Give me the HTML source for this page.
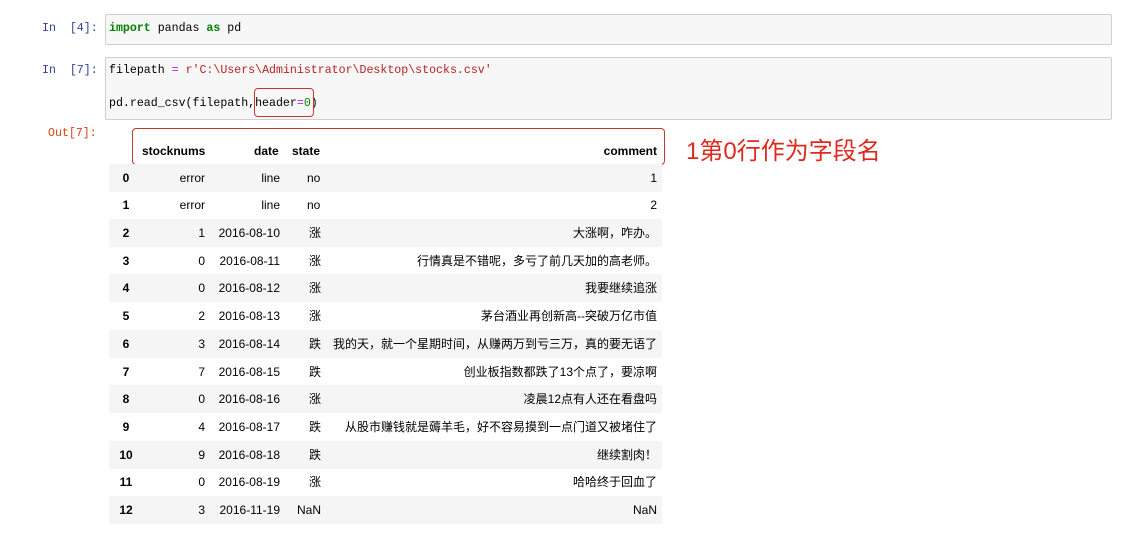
<!DOCTYPE html>
<html><head><meta charset="utf-8"><style>
body{margin:0;width:1135px;height:539px;background:#fff;position:relative;overflow:hidden;font-family:"Liberation Sans","Noto Sans CJK SC",sans-serif;}
.p{position:absolute;font-family:"Liberation Mono","Noto Sans CJK SC",monospace;font-size:11.6px;}
.box{position:absolute;left:105px;width:1005px;border:1px solid #cfcfcf;background:#f7f7f7;border-radius:2px;}
.code{position:absolute;left:109px;font-family:"Liberation Mono",monospace;font-size:11.6px;color:#000;}
.k{color:#008000;font-weight:bold}
.s{color:#ba2121}
.o{color:#aa22ff}
.n{color:#080}
.r{position:absolute;left:109px;width:553px;height:28px;font-size:12px;color:#000;}
.r.g{background:#f5f5f5}
.r span{position:absolute;top:7px;line-height:14px;}
.i{font-weight:bold;width:30px;text-align:center;left:2px}
.a{right:457px}.d{right:382px}.c{right:5px}
.r span.cj{left:200px}
.h{position:absolute;top:144px;font-size:12px;font-weight:bold}
</style></head><body>
<div class="p" style="left:42px;top:22px;color:#303f9f">In&nbsp; [4]:</div>
<div class="box" style="top:14px;height:29px"></div>
<div class="code" style="top:22px"><span class="k">import</span> pandas <span class="k">as</span> pd</div>

<div class="p" style="left:42px;top:64px;color:#303f9f">In&nbsp; [7]:</div>
<div class="box" style="top:57px;height:61px"></div>
<div class="code" style="top:64px">filepath <span class="o">=</span> <span class="s">r'C:\Users\Administrator\Desktop\stocks.csv'</span></div>
<div class="code" style="top:97px">pd.read_csv(filepath,header<span class="o">=</span><span class="n">0</span>)</div>
<div style="position:absolute;left:254px;top:88px;width:58px;height:27px;border:1px solid #c0392b;border-radius:4px"></div>

<div class="p" style="left:48px;top:127px;color:#d84315">Out[7]:</div>
<div style="position:absolute;left:109px;top:164px;width:553px;height:1px;background:#000"></div>
<div class="h" style="left:142px">stocknums</div>
<div class="h" style="left:254px">date</div>
<div class="h" style="left:292px">state</div>
<div class="h" style="right:478px">comment</div>
<div style="position:absolute;left:132px;top:128px;width:531px;height:35px;border:1px solid #c0392b;border-radius:4px"></div>
<div style="position:absolute;left:686px;top:131px;font-size:24px;color:#e0281e;font-family:'Liberation Sans','Noto Sans CJK SC',sans-serif">1第0行作为字段名</div>

<div class="r g" style="top:164px"><span class="i">0</span><span class="a">error</span><span class="d">line</span><span style="left:198px">no</span><span class="c">1</span></div>
<div class="r" style="top:191px"><span class="i">1</span><span class="a">error</span><span class="d">line</span><span style="left:198px">no</span><span class="c">2</span></div>
<div class="r g" style="top:219px"><span class="i">2</span><span class="a">1</span><span class="d">2016-08-10</span><span class="cj">涨</span><span class="c">大涨啊，咋办。</span></div>
<div class="r" style="top:247px"><span class="i">3</span><span class="a">0</span><span class="d">2016-08-11</span><span class="cj">涨</span><span class="c">行情真是不错呢，多亏了前几天加的高老师。</span></div>
<div class="r g" style="top:274px"><span class="i">4</span><span class="a">0</span><span class="d">2016-08-12</span><span class="cj">涨</span><span class="c">我要继续追涨</span></div>
<div class="r" style="top:302px"><span class="i">5</span><span class="a">2</span><span class="d">2016-08-13</span><span class="cj">涨</span><span class="c">茅台酒业再创新高--突破万亿市值</span></div>
<div class="r g" style="top:330px"><span class="i">6</span><span class="a">3</span><span class="d">2016-08-14</span><span class="cj">跌</span><span class="c">我的天，就一个星期时间，从赚两万到亏三万，真的要无语了</span></div>
<div class="r" style="top:358px"><span class="i">7</span><span class="a">7</span><span class="d">2016-08-15</span><span class="cj">跌</span><span class="c">创业板指数都跌了13个点了，要凉啊</span></div>
<div class="r g" style="top:385px"><span class="i">8</span><span class="a">0</span><span class="d">2016-08-16</span><span class="cj">涨</span><span class="c">凌晨12点有人还在看盘吗</span></div>
<div class="r" style="top:413px"><span class="i">9</span><span class="a">4</span><span class="d">2016-08-17</span><span class="cj">跌</span><span class="c">从股市赚钱就是薅羊毛，好不容易摸到一点门道又被堵住了</span></div>
<div class="r g" style="top:441px"><span class="i">10</span><span class="a">9</span><span class="d">2016-08-18</span><span class="cj">跌</span><span class="c">继续割肉！</span></div>
<div class="r" style="top:468px"><span class="i">11</span><span class="a">0</span><span class="d">2016-08-19</span><span class="cj">涨</span><span class="c">哈哈终于回血了</span></div>
<div class="r g" style="top:496px"><span class="i">12</span><span class="a">3</span><span class="d">2016-11-19</span><span style="left:188px">NaN</span><span class="c">NaN</span></div>
</body></html>
